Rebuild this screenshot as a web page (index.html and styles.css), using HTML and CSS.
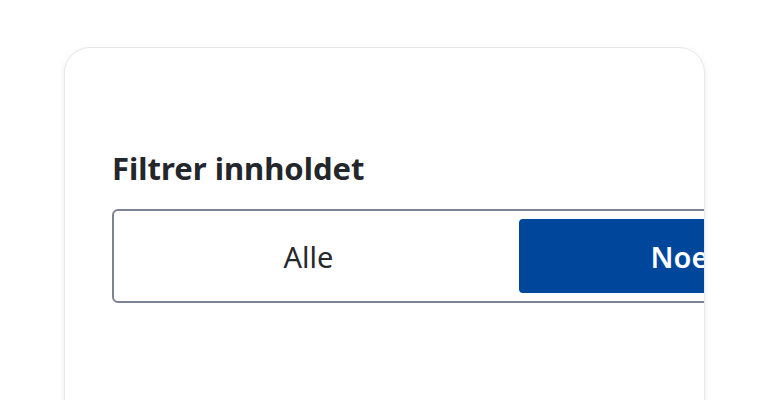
FILE: index.html
```html
<!DOCTYPE html>
<html lang="no">
<head>
<meta charset="utf-8">
<link rel="stylesheet" href="styles.css">
</head>
<body>
<div class="page">
  <section class="card">
    <h2 class="label">Filtrer innholdet</h2>
    <div class="segmented" role="radiogroup">
      <button class="opt opt-first">Alle</button>
      <button class="opt opt-active">Noe</button>
    </div>
  </section>
</div>
</body>
</html>
```
FILE: styles.css
```css
html, body {
  margin: 0;
  padding: 0;
  background: #ffffff;
}
body {
  font-family: "Noto Sans", "Open Sans", sans-serif;
  overflow: hidden;
}
.page {
  padding: 47px 0 0 64px;
}
.card {
  box-sizing: border-box;
  width: 641px;
  height: 420px;
  border: 1px solid #e8e8e8;
  border-radius: 26px;
  box-shadow: 0 2px 6px rgba(0,0,0,0.08);
  background: #fff;
  overflow: hidden;
  padding: 100px 0 0 47px;
}
.label {
  margin: 0;
  font-size: 31px;
  line-height: 40px;
  font-weight: 700;
  color: #23262b;
}
.segmented {
  margin-top: 21px;
  display: grid;
  grid-template-columns: 374px 320px;
  column-gap: 24px;
  width: 744px;
  height: 94px;
  box-sizing: border-box;
  padding: 8px;
  border: 2px solid #7b8394;
  border-radius: 6px;
}
.opt {
  border: 0;
  border-radius: 4px;
  background: transparent;
  font-family: inherit;
  font-size: 29px;
  color: #26282c;
  padding: 0;
}
.opt-first {
  margin-left: -1px;
}
.opt-active {
  background: #00479b;
  color: #fff;
  font-weight: 600;
  margin-left: -1px;
}
```
